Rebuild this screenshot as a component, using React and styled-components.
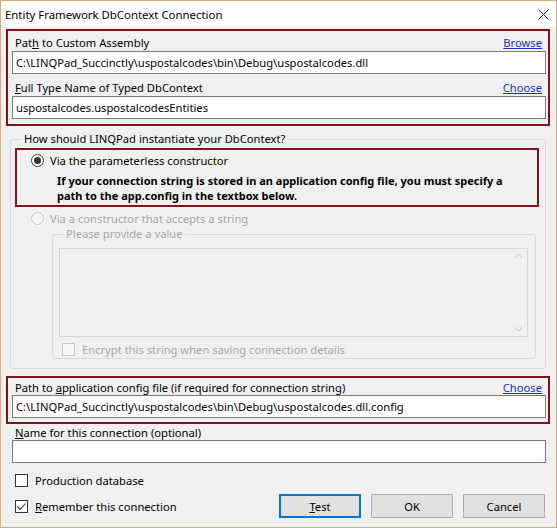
import React from "react";
import styled, { createGlobalStyle } from "styled-components";

const GlobalStyle = createGlobalStyle`
  html, body {
    margin: 0;
    padding: 0;
    background: #ffffff;
  }
  body {
    font-family: "Noto Sans", "Open Sans", sans-serif;
    font-size: 11.2px;
    color: #000;
  }
  * {
    box-sizing: border-box;
  }
`;

const Window = styled.div`
  width: 557px;
  height: 528px;
  border: 1px solid #d8ae78;
  background: #f0f0f0;
  display: flex;
  flex-direction: column;
  overflow: hidden;
`;

const TitleBar = styled.div`
  height: 26px;
  flex-shrink: 0;
  background: #ffffff;
  display: flex;
  align-items: center;
  justify-content: space-between;
  padding-left: 4px;
`;

const Title = styled.span`
  font-size: 11.4px;
`;

const CloseButton = styled.div`
  width: 24px;
  height: 26px;
  margin-right: 1px;
  display: flex;
  align-items: center;
  justify-content: center;
`;

const Body = styled.div`
  padding: 2px 6px 0 5px;
  display: flex;
  flex-direction: column;
`;

const RedBox = styled.div`
  border: 2px solid #7b1518;
  padding: ${(p) => p.$pad || "0"};
  margin-top: ${(p) => p.$top || 0}px;
`;

const FieldHeader = styled.div`
  display: flex;
  justify-content: space-between;
  align-items: center;
  height: ${(p) => p.$h || 17}px;
  padding: 0 4px 0 ${(p) => p.$indent || 3}px;
  margin-top: ${(p) => p.$top || 0}px;
`;

const Link = styled.a`
  color: #1a2fd0;
  text-decoration: underline;
  cursor: pointer;
`;

const Key = styled.span`
  text-decoration: underline;
`;

const TextBox = styled.div`
  height: 23px;
  border: 1px solid #7a7a7a;
  background: #ffffff;
  padding: 0 3px;
  display: flex;
  align-items: center;
  white-space: nowrap;
  overflow: hidden;
  margin-right: ${(p) => p.$right || 0}px;
  margin-left: ${(p) => p.$left || 0}px;
`;

const GroupBox = styled.fieldset`
  margin: ${(p) => p.$margin};
  padding: ${(p) => p.$pad};
  border: 1px solid #dadada;
  border-radius: 3px;
  min-width: 0;
`;

const Legend = styled.legend`
  margin-left: ${(p) => p.$indent || 7}px;
  padding: 0 2px;
  line-height: 16px;
  color: ${(p) => (p.$disabled ? "#a7a7a7" : "#000")};
`;

const OptionRow = styled.div`
  display: flex;
  align-items: center;
  height: 16px;
  padding-left: ${(p) => p.$indent || 0}px;
  margin-top: ${(p) => p.$top || 0}px;
  color: ${(p) => (p.$disabled ? "#a7a7a7" : "#000")};
`;

const Radio = styled.span`
  width: 13px;
  height: 13px;
  border-radius: 50%;
  border: 1px solid ${(p) => (p.$disabled ? "#c6c6c6" : "#333333")};
  background: ${(p) => (p.$disabled ? "#f4f4f4" : "#ffffff")};
  display: flex;
  align-items: center;
  justify-content: center;
  flex-shrink: 0;
  margin-right: 6px;

  &::after {
    content: "";
    width: 7px;
    height: 7px;
    border-radius: 50%;
    background: #333333;
    display: ${(p) => (p.$checked ? "block" : "none")};
  }
`;

const Box = styled.span`
  width: 13px;
  height: 13px;
  border: 1px solid ${(p) => (p.$disabled ? "#c6c6c6" : "#333333")};
  background: ${(p) => (p.$disabled ? "#f7f7f7" : "#ffffff")};
  display: flex;
  align-items: center;
  justify-content: center;
  flex-shrink: 0;
  margin-right: 7px;
`;

const Note = styled.div`
  margin: 5px 0 0 40px;
  font-size: 11px;
  font-weight: 700;
  line-height: 15px;
`;

const Memo = styled.div`
  height: 89px;
  border: 1px solid #d6d6d6;
  background: #f0f0f0;
  display: flex;
  justify-content: flex-end;
`;

const ScrollTrack = styled.div`
  width: 17px;
  display: flex;
  flex-direction: column;
  justify-content: space-between;
  align-items: center;
  padding: 4px 0;
`;

const BottomRow = styled.div`
  display: flex;
  align-items: center;
  justify-content: space-between;
  margin-top: 6px;
  padding: 0 5px 0 9px;
`;

const CheckRow = styled.div`
  display: flex;
  align-items: center;
  height: 16px;
  padding-left: ${(p) => p.$indent || 0}px;
  margin-top: ${(p) => p.$top || 0}px;
  color: ${(p) => (p.$disabled ? "#a7a7a7" : "#000")};
`;

const Buttons = styled.div`
  display: flex;
  gap: 10px;
`;

const Button = styled.div`
  width: 82px;
  height: 24px;
  background: #e1e1e1;
  border: 1px solid ${(p) => (p.$default ? "#0078d7" : "#adadad")};
  box-shadow: ${(p) => (p.$default ? "inset 0 0 0 1px #0078d7" : "none")};
  display: flex;
  align-items: center;
  justify-content: center;
`;

const Chevron = ({ up }) => (
  <svg width="9" height="6" viewBox="0 0 9 6">
    <path
      d={up ? "M0.5 5 L4.5 1 L8.5 5" : "M0.5 1 L4.5 5 L8.5 1"}
      fill="none"
      stroke="#c4c4c4"
      strokeWidth="1"
    />
  </svg>
);

const Check = () => (
  <svg width="11" height="11" viewBox="0 0 11 11">
    <path d="M1.5 5.5 L4.2 8.3 L9.5 2.5" fill="none" stroke="#333" strokeWidth="1.1" />
  </svg>
);

const DbContextDialog = () => {
  return (
    <Window>
      <TitleBar>
        <Title>Entity Framework DbContext Connection</Title>
        <CloseButton>
          <svg width="11" height="11" viewBox="0 0 11 11">
            <path d="M0.5 0.5 L10.5 10.5 M10.5 0.5 L0.5 10.5" stroke="#222" strokeWidth="1" />
          </svg>
        </CloseButton>
      </TitleBar>

      <Body>
        <RedBox $pad="3px 2px 5px 4px">
          <FieldHeader>
            <span>
              Pat<Key>h</Key> to Custom Assembly
            </span>
            <Link>Browse</Link>
          </FieldHeader>
          <TextBox>C:\LINQPad_Succinctly\uspostalcodes\bin\Debug\uspostalcodes.dll</TextBox>
          <FieldHeader $top={5}>
            <span>
              <Key>F</Key>ull Type Name of Typed DbContext
            </span>
            <Link>Choose</Link>
          </FieldHeader>
          <TextBox>uspostalcodes.uspostalcodesEntities</TextBox>
        </RedBox>

        <GroupBox $margin="5px 4px 0 4px" $pad="1px 6px 9px 4px">
          <Legend>How should LINQPad instantiate your DbContext?</Legend>
          <RedBox $pad="2px 0 2px 0">
            <OptionRow $indent={14}>
              <Radio $checked />
              Via the parameterless constructor
            </OptionRow>
            <Note>
              If your connection string is stored in an application config file, you must specify a
              <br />
              path to the app.config in the textbox below.
            </Note>
          </RedBox>
          <OptionRow $indent={16} $top={3} $disabled>
            <Radio $disabled />
            Via a constructor that accepts a string
          </OptionRow>
          <GroupBox $margin="0 3px 0 37px" $pad="6px 7px 1px 6px">
            <Legend $indent={5} $disabled>
              Please provide a value
            </Legend>
            <Memo>
              <ScrollTrack>
                <Chevron up />
                <Chevron />
              </ScrollTrack>
            </Memo>
            <CheckRow $indent={3} $top={4} $disabled>
              <Box $disabled />
              Encrypt this string when saving connection details
            </CheckRow>
          </GroupBox>
        </GroupBox>

        <RedBox $pad="1px 2px 4px 4px" $top={7}>
          <FieldHeader $h={16}>
            <span>
              Path to <Key>a</Key>pplication config file (if required for connection string)
            </span>
            <Link>Choose</Link>
          </FieldHeader>
          <TextBox>C:\LINQPad_Succinctly\uspostalcodes\bin\Debug\uspostalcodes.dll.config</TextBox>
        </RedBox>

        <FieldHeader $h={16} $indent={9}>
          <span>
            <Key>N</Key>ame for this connection (optional)
          </span>
        </FieldHeader>
        <TextBox $left={6} $right={4} />

        <CheckRow $indent={9} $top={9}>
          <Box />
          Production database
        </CheckRow>

        <BottomRow>
          <CheckRow>
            <Box>
              <Check />
            </Box>
            <span>
              <Key>R</Key>emember this connection
            </span>
          </CheckRow>
          <Buttons>
            <Button $default>
              <span>
                <Key>T</Key>est
              </span>
            </Button>
            <Button>OK</Button>
            <Button>Cancel</Button>
          </Buttons>
        </BottomRow>
      </Body>
    </Window>
  );
};

export default function App() {
  return (
    <>
      <GlobalStyle />
      <DbContextDialog />
    </>
  );
}
